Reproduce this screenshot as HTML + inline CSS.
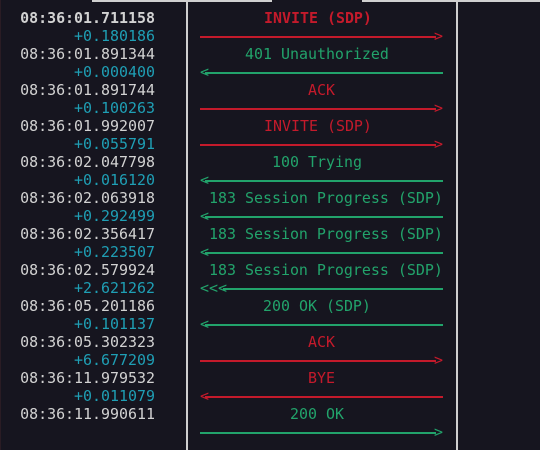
<!DOCTYPE html>
<html><head><meta charset="utf-8"><style>
html,body{margin:0;padding:0}
body{width:540px;height:450px;background:#16151f;position:relative;overflow:hidden;font-family:"DejaVu Sans Mono","Liberation Mono",monospace;font-size:14.95px;}
.t{position:absolute;line-height:18px;white-space:pre;}
.ts{right:385px;color:#d2d2d2;}
.d{right:385px;color:#1f9fb5;}
.r{color:#c41a2b}
.g{color:#22a36b}
.ln{position:absolute;height:1.5px;}
.v{position:absolute;top:0;width:1.5px;height:450px;background:#cfcfcf}
.h{position:absolute;top:0;height:2px;background:#d0d0d0}
</style></head><body>
<div class="h" style="left:92px;width:180px"></div>
<div class="h" style="left:362px;width:178px"></div>
<div class="v" style="left:186px"></div>
<div class="v" style="left:456px"></div>
<div style="position:absolute;left:0;top:0;width:1px;height:450px;background:#2a1c24"></div>

<div class="t ts" style="top:9px;font-weight:bold">08:36:01.711158</div>
<div class="t d" style="top:27px">+0.180186</div>
<div class="t ts" style="top:45px">08:36:01.891344</div>
<div class="t d" style="top:63px">+0.000400</div>
<div class="t ts" style="top:81px">08:36:01.891744</div>
<div class="t d" style="top:99px">+0.100263</div>
<div class="t ts" style="top:117px">08:36:01.992007</div>
<div class="t d" style="top:135px">+0.055791</div>
<div class="t ts" style="top:153px">08:36:02.047798</div>
<div class="t d" style="top:171px">+0.016120</div>
<div class="t ts" style="top:189px">08:36:02.063918</div>
<div class="t d" style="top:207px">+0.292499</div>
<div class="t ts" style="top:225px">08:36:02.356417</div>
<div class="t d" style="top:243px">+0.223507</div>
<div class="t ts" style="top:261px">08:36:02.579924</div>
<div class="t d" style="top:279px">+2.621262</div>
<div class="t ts" style="top:297px">08:36:05.201186</div>
<div class="t d" style="top:315px">+0.101137</div>
<div class="t ts" style="top:333px">08:36:05.302323</div>
<div class="t d" style="top:351px">+6.677209</div>
<div class="t ts" style="top:369px">08:36:11.979532</div>
<div class="t d" style="top:387px">+0.011079</div>
<div class="t ts" style="top:405px">08:36:11.990611</div>

<!-- labels -->
<div class="t r" style="top:9px;left:264px;font-weight:bold">INVITE (SDP)</div>
<div class="t g" style="top:45px;left:245px">401 Unauthorized</div>
<div class="t r" style="top:81px;left:308px">ACK</div>
<div class="t r" style="top:117px;left:264px">INVITE (SDP)</div>
<div class="t g" style="top:153px;left:272px">100 Trying</div>
<div class="t g" style="top:189px;left:209px">183 Session Progress (SDP)</div>
<div class="t g" style="top:225px;left:209px">183 Session Progress (SDP)</div>
<div class="t g" style="top:261px;left:209px">183 Session Progress (SDP)</div>
<div class="t g" style="top:297px;left:263px">200 OK (SDP)</div>
<div class="t r" style="top:333px;left:308px">ACK</div>
<div class="t r" style="top:369px;left:308px">BYE</div>
<div class="t g" style="top:405px;left:290px">200 OK</div>

<!-- arrows: right -->
<div class="ln" style="top:36px;left:200px;width:236px;background:#c41a2b"></div><div class="t r" style="top:27px;left:434px">&gt;</div>
<div class="ln" style="top:72px;left:205px;width:238px;background:#22a36b"></div><div class="t g" style="top:63px;left:200px">&lt;</div>
<div class="ln" style="top:108px;left:200px;width:236px;background:#c41a2b"></div><div class="t r" style="top:99px;left:434px">&gt;</div>
<div class="ln" style="top:144px;left:200px;width:236px;background:#c41a2b"></div><div class="t r" style="top:135px;left:434px">&gt;</div>
<div class="ln" style="top:180px;left:205px;width:238px;background:#22a36b"></div><div class="t g" style="top:171px;left:200px">&lt;</div>
<div class="ln" style="top:216px;left:205px;width:238px;background:#22a36b"></div><div class="t g" style="top:207px;left:200px">&lt;</div>
<div class="ln" style="top:252px;left:205px;width:238px;background:#22a36b"></div><div class="t g" style="top:243px;left:200px">&lt;</div>
<div class="ln" style="top:288px;left:223px;width:220px;background:#22a36b"></div><div class="t g" style="top:279px;left:200px">&lt;&lt;&lt;</div>
<div class="ln" style="top:324px;left:205px;width:238px;background:#22a36b"></div><div class="t g" style="top:315px;left:200px">&lt;</div>
<div class="ln" style="top:360px;left:200px;width:236px;background:#c41a2b"></div><div class="t r" style="top:351px;left:434px">&gt;</div>
<div class="ln" style="top:396px;left:205px;width:238px;background:#c41a2b"></div><div class="t r" style="top:387px;left:200px">&lt;</div>
<div class="ln" style="top:432px;left:200px;width:236px;background:#22a36b"></div><div class="t g" style="top:423px;left:434px">&gt;</div>
</body></html>
